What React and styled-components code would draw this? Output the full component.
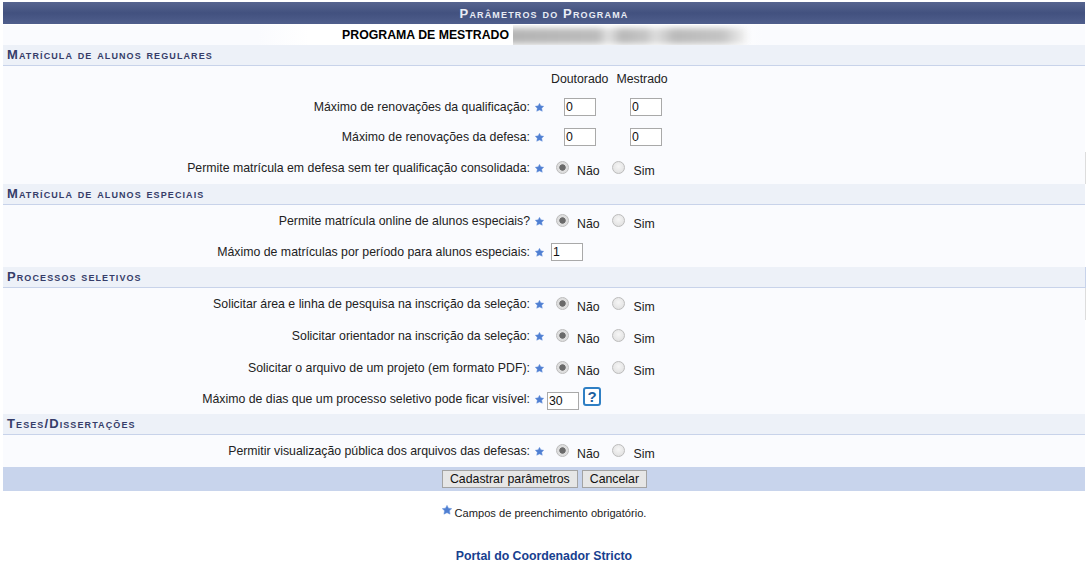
import styled, { createGlobalStyle } from 'styled-components';

const GlobalStyle = createGlobalStyle`
  html, body {
    margin: 0;
    padding: 0;
    background: #fff;
    font-family: "Liberation Sans", Arial, sans-serif;
    font-size: 12px;
    color: #222;
  }
`;

const Page = styled.div`
  width: 1082px;
  margin: 0 6px 0 3px;
  padding-top: 2px;
`;

const Title = styled.h1`
  margin: 0 0 1px;
  height: 22px;
  display: flex;
  align-items: center;
  justify-content: center;
  background: linear-gradient(#56648f, #42517f 50%, #4f5e8c);
  color: #e8ecf5;
  font-size: 13px;
  font-weight: 700;
  font-variant: small-caps;
  letter-spacing: 1.15px;
`;

const ProgramRow = styled.div`
  height: 20px;
  display: flex;
  background: #fafbfe;
`;

const ProgramLabel = styled.div`
  width: 506px;
  padding-right: 4px;
  text-align: right;
  line-height: 20px;
  font-size: 12.3px;
  font-weight: 700;
  color: #000;
  background: linear-gradient(90deg, #fafbfe 50%, #fff 60%);
`;

const Blurred = styled.div`
  width: 250px;
  height: 20px;
  overflow: hidden;
  background: linear-gradient(90deg, #fff 85%, #fafbfe);
`;

const BlurBar = styled.div`
  width: 240px;
  height: 16px;
  margin: 3px 0 0 -6px;
  filter: blur(3px);
  background: linear-gradient(90deg, #b4b4b4, #bcbcbc 38%, #e2e2e2 42%, #b8b8b8 48%, #c6c6c6 58%, #dedede 62%, #bababa 70%, #c4c4c4 90%, #f4f4f4);
`;

const Section = styled.h2`
  margin: 0;
  height: 19px;
  padding: 0 0 1px 4px;
  display: flex;
  align-items: center;
  background: #edf1f8;
  border-bottom: 1px solid #c8d3ea;
  color: #363d69;
  font-size: 13px;
  font-weight: 700;
  font-variant: small-caps;
  letter-spacing: 1.1px;
  ${(p) => p.$edge && 'box-shadow: 1px 0 0 #c8d3ea;'}
`;

const Body = styled.div`
  background: #fafbfe;
`;

const Row = styled.div`
  height: ${(p) => p.$h}px;
  display: flex;
  align-items: center;
  ${(p) => p.$edge && 'box-shadow: 1px 0 0 #ddd;'}
`;

const Label = styled.label`
  width: 527px;
  flex: none;
  text-align: right;
  font-size: 12.32px;
  color: #222;
`;

const Star = ({ className, size = 9 }) => (
  <svg className={className} viewBox="0 0 12 12" width={size} height={size}>
    <path
      d="M6 .4l1.8 3.4 3.9.5-2.7 2.7.7 4L6 9.2l-3.7 1.8.7-4L.3 4.3l3.9-.5z"
      fill="#4f7fd2"
      stroke="#6f98dd"
      strokeWidth=".6"
      strokeLinejoin="round"
    />
  </svg>
);

const RowStar = styled(Star)`
  flex: none;
  margin: 0 1px 0 5px;
`;

const Fields = styled.div`
  margin-left: ${(p) => p.$left}px;
  margin-top: ${(p) => p.$top || 0}px;
  display: flex;
  align-items: center;
`;

const NumberInput = styled.input`
  box-sizing: border-box;
  width: 32px;
  height: 18px;
  padding: 0 1px;
  margin-right: ${(p) => p.$gap || 0}px;
  border: 1px solid #a9a9a9;
  background: #fff;
  font-family: inherit;
  font-size: 12.3px;
  color: #111;
`;

const Radio = styled.input`
  appearance: none;
  box-sizing: border-box;
  flex: none;
  width: 13px;
  height: 13px;
  margin: -2px 0 0;
  border-radius: 50%;
  border: 1px solid #bcbcbc;
  background: radial-gradient(circle at 50% 40%, #f6f6f6, #dcdcdc);
  &:checked {
    background: radial-gradient(circle, #6a6a6a 0 2.8px, #dedede 3.6px);
  }
`;

const RadioText = styled.span`
  margin: 0 ${(p) => p.$gap || 0}px 0 ${(p) => p.$lead || 8}px;
  padding-top: 5px;
  font-size: 12.3px;
  color: #222;
`;

const Help = styled.span`
  width: 18px;
  height: 19px;
  margin: -9px 0 0 4px;
  box-sizing: border-box;
  display: flex;
  align-items: center;
  justify-content: center;
  border: 2px solid #2f7fc4;
  border-radius: 3px;
  background: #fff;
  color: #1d5f9f;
  font-size: 15px;
  font-weight: 700;
`;

const HeadCell = styled.span`
  font-size: 12.3px;
  color: #222;
  margin-right: ${(p) => p.$gap || 0}px;
`;

const ButtonBar = styled.div`
  height: 24px;
  padding-left: 1px;
  display: flex;
  align-items: center;
  justify-content: center;
  gap: 4px;
  background: #c8d4ec;
`;

const Button = styled.button`
  height: 18px;
  padding: 0 7px;
  border: 1px solid #a3a3a3;
  background: #e6e6e6;
  font-family: inherit;
  font-size: 12.32px;
  line-height: 14px;
  color: #111;
`;

const Note = styled.div`
  margin-top: 15px;
  display: flex;
  justify-content: center;
  align-items: flex-start;
  gap: 3px;
  font-size: 11.1px;
  color: #222;
  line-height: 15px;
`;

const NoteStar = styled(Star)`
  margin-top: -1px;
`;

const PortalLink = styled.a`
  display: block;
  margin-top: 28px;
  text-align: center;
  font-size: 12.3px;
  font-weight: 700;
  color: #17408f;
`;

function YesNo() {
  return (
    <Fields $left={11}>
      <Radio type="radio" defaultChecked readOnly />
      <RadioText $gap={12}>Não</RadioText>
      <Radio type="radio" readOnly />
      <RadioText $lead={9}>Sim</RadioText>
    </Fields>
  );
}

function Param({ label, h, edge, children }) {
  return (
    <Row $h={h} $edge={edge}>
      <Label>{label}</Label>
      <RowStar />
      {children}
    </Row>
  );
}

function App() {
  return (
    <>
      <GlobalStyle />
      <Page>
        <Title>Parâmetros do Programa</Title>
        <ProgramRow>
          <ProgramLabel>PROGRAMA DE MESTRADO</ProgramLabel>
          <Blurred>
            <BlurBar />
          </Blurred>
        </ProgramRow>

        <Section>Matrícula de alunos regulares</Section>
        <Body>
          <Row $h={26}>
            <Fields $left={548}>
              <HeadCell $gap={8}>Doutorado</HeadCell>
              <HeadCell>Mestrado</HeadCell>
            </Fields>
          </Row>
          <Param label="Máximo de renovações da qualificação:" h={30}>
            <Fields $left={19}>
              <NumberInput defaultValue="0" $gap={34} />
              <NumberInput defaultValue="0" />
            </Fields>
          </Param>
          <Param label="Máximo de renovações da defesa:" h={30}>
            <Fields $left={19}>
              <NumberInput defaultValue="0" $gap={34} />
              <NumberInput defaultValue="0" />
            </Fields>
          </Param>
          <Param label="Permite matrícula em defesa sem ter qualificação consolidada:" h={32} edge>
            <YesNo />
          </Param>
        </Body>

        <Section>Matrícula de alunos especiais</Section>
        <Body>
          <Param label="Permite matrícula online de alunos especiais?" h={32}>
            <YesNo />
          </Param>
          <Param label="Máximo de matrículas por período para alunos especiais:" h={30}>
            <Fields $left={6}>
              <NumberInput defaultValue="1" />
            </Fields>
          </Param>
        </Body>

        <Section $edge>Processos seletivos</Section>
        <Body>
          <Param label="Solicitar área e linha de pesquisa na inscrição da seleção:" h={32} edge>
            <YesNo />
          </Param>
          <Param label="Solicitar orientador na inscrição da seleção:" h={32}>
            <YesNo />
          </Param>
          <Param label="Solicitar o arquivo de um projeto (em formato PDF):" h={32}>
            <YesNo />
          </Param>
          <Param label="Máximo de dias que um processo seletivo pode ficar visível:" h={30}>
            <Fields $left={2} $top={4}>
              <NumberInput defaultValue="30" />
              <Help>?</Help>
            </Fields>
          </Param>
        </Body>

        <Section>Teses/Dissertações</Section>
        <Body>
          <Param label="Permitir visualização pública dos arquivos das defesas:" h={32}>
            <YesNo />
          </Param>
        </Body>

        <ButtonBar>
          <Button>Cadastrar parâmetros</Button>
          <Button>Cancelar</Button>
        </ButtonBar>

        <Note>
          <NoteStar size={10} />
          Campos de preenchimento obrigatório.
        </Note>
        <PortalLink>Portal do Coordenador Stricto</PortalLink>
      </Page>
    </>
  );
}

export default App;
